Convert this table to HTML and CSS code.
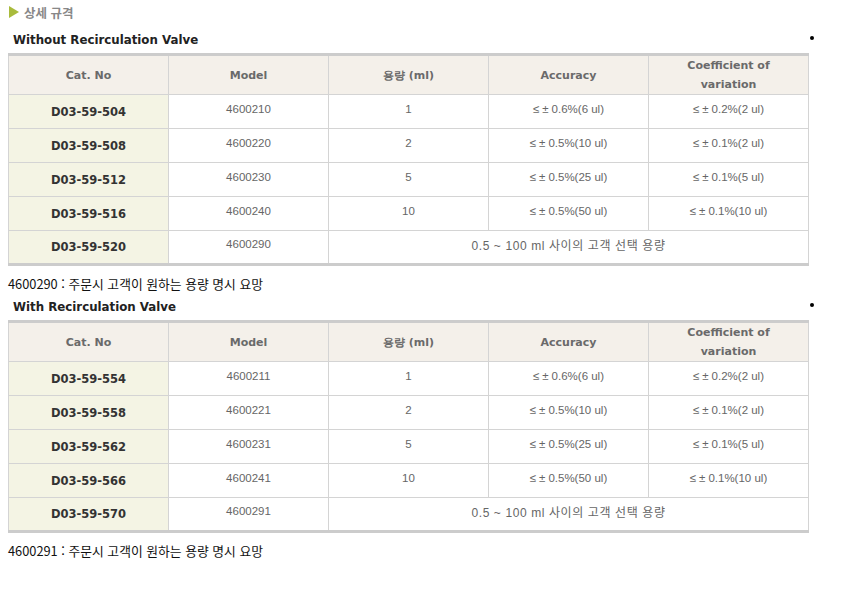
FILE: index.html
```html
<!DOCTYPE html>
<html lang="ko">
<head>
<meta charset="utf-8">
<link rel="stylesheet" href="styles.css">
</head>
<body>
<div class="page">
  <div class="title">
    <svg class="tri" width="10" height="12" viewBox="0 0 10 12"><polygon points="0,0 10,6 0,12" fill="#a9bb3c"/></svg>
    <span>상세 규격</span>
  </div>

  <div class="sub"><span class="subtext">Without Recirculation Valve</span><span class="dot"></span></div>
  <table class="spec">
    <colgroup><col><col><col><col><col></colgroup>
    <thead>
      <tr><th>Cat. No</th><th>Model</th><th>용량 (ml)</th><th>Accuracy</th><th>Coefficient of<br>variation</th></tr>
    </thead>
    <tbody>
      <tr><td class="cat">D03-59-504</td><td>4600210</td><td>1</td><td><span class="sym">≤±</span>0.6%(6 ul)</td><td><span class="sym">≤±</span>0.2%(2 ul)</td></tr>
      <tr><td class="cat">D03-59-508</td><td>4600220</td><td>2</td><td><span class="sym">≤±</span>0.5%(10 ul)</td><td><span class="sym">≤±</span>0.1%(2 ul)</td></tr>
      <tr><td class="cat">D03-59-512</td><td>4600230</td><td>5</td><td><span class="sym">≤±</span>0.5%(25 ul)</td><td><span class="sym">≤±</span>0.1%(5 ul)</td></tr>
      <tr><td class="cat">D03-59-516</td><td>4600240</td><td>10</td><td><span class="sym">≤±</span>0.5%(50 ul)</td><td><span class="sym">≤±</span>0.1%(10 ul)</td></tr>
      <tr><td class="cat">D03-59-520</td><td>4600290</td><td class="range" colspan="3">0.5 ~ 100 ml 사이의 고객 선택 용량</td></tr>
    </tbody>
  </table>
  <p class="note">4600290 : 주문시 고객이 원하는 용량 명시 요망</p>

  <div class="sub"><span class="subtext">With Recirculation Valve</span><span class="dot"></span></div>
  <table class="spec">
    <colgroup><col><col><col><col><col></colgroup>
    <thead>
      <tr><th>Cat. No</th><th>Model</th><th>용량 (ml)</th><th>Accuracy</th><th>Coefficient of<br>variation</th></tr>
    </thead>
    <tbody>
      <tr><td class="cat">D03-59-554</td><td>4600211</td><td>1</td><td><span class="sym">≤±</span>0.6%(6 ul)</td><td><span class="sym">≤±</span>0.2%(2 ul)</td></tr>
      <tr><td class="cat">D03-59-558</td><td>4600221</td><td>2</td><td><span class="sym">≤±</span>0.5%(10 ul)</td><td><span class="sym">≤±</span>0.1%(2 ul)</td></tr>
      <tr><td class="cat">D03-59-562</td><td>4600231</td><td>5</td><td><span class="sym">≤±</span>0.5%(25 ul)</td><td><span class="sym">≤±</span>0.1%(5 ul)</td></tr>
      <tr><td class="cat">D03-59-566</td><td>4600241</td><td>10</td><td><span class="sym">≤±</span>0.5%(50 ul)</td><td><span class="sym">≤±</span>0.1%(10 ul)</td></tr>
      <tr><td class="cat">D03-59-570</td><td>4600291</td><td class="range" colspan="3">0.5 ~ 100 ml 사이의 고객 선택 용량</td></tr>
    </tbody>
  </table>
  <p class="note">4600291 : 주문시 고객이 원하는 용량 명시 요망</p>
</div>
</body>
</html>
```

FILE: styles.css
```css
html, body {
  margin: 0;
  padding: 0;
  background: #ffffff;
}

.page {
  padding: 0 0 0 8px;
  font-family: "Liberation Sans", "Noto Sans CJK KR", sans-serif;
  color: #222;
}

.title {
  display: flex;
  align-items: center;
  gap: 5px;
  height: 24px;
  padding-left: 1px;
  font-family: "Noto Sans CJK KR", sans-serif;
  font-size: 12.5px;
  font-weight: bold;
  color: #888888;
}

.tri {
  display: block;
}

.sub {
  display: flex;
  justify-content: space-between;
  align-items: flex-start;
  width: 806px;
  height: 29px;
  box-sizing: border-box;
  padding: 9px 0 0 5px;
}

.subtext {
  font-family: "DejaVu Sans", sans-serif;
  font-weight: bold;
  font-size: 11.8px;
  color: #222;
  line-height: 14px;
}

.dot {
  width: 4px;
  height: 4px;
  border-radius: 50%;
  background: #000;
  margin-top: 3px;
}

.spec {
  width: 800px;
  border-collapse: collapse;
  table-layout: fixed;
  border-top: 3px solid #cccccc;
  border-bottom: 3px solid #cccccc;
}

.spec col {
  width: 160px;
}

.spec th {
  height: 38px;
  padding: 0;
  background: #f4f0ea;
  border: 1px solid #d4d4d4;
  border-top: none;
  font-family: "DejaVu Sans", sans-serif;
  font-weight: bold;
  font-size: 11px;
  line-height: 19px;
  color: #6a6a6a;
  text-align: center;
  vertical-align: middle;
}

.spec td {
  height: 34px;
  padding: 0 0 6px 0;
  box-sizing: border-box;
  border: 1px solid #d4d4d4;
  font-size: 11.5px;
  color: #666;
  text-align: center;
  vertical-align: middle;
}

.spec td .sym {
  letter-spacing: 3px;
}

.spec td.range {
  font-size: 12px;
  letter-spacing: 0.6px;
}

.spec tr:last-child td {
  border-bottom: none;
}

.spec td.cat {
  background: #f4f4e4;
  font-family: "DejaVu Sans", sans-serif;
  font-weight: bold;
  font-size: 11.5px;
  color: #333;
  padding: 0;
}

.note {
  margin: 0;
  height: 25px;
  box-sizing: border-box;
  padding-top: 10px;
  font-family: "Noto Sans CJK KR", sans-serif;
  font-size: 12.8px;
  line-height: 16px;
  color: #111;
}
```
